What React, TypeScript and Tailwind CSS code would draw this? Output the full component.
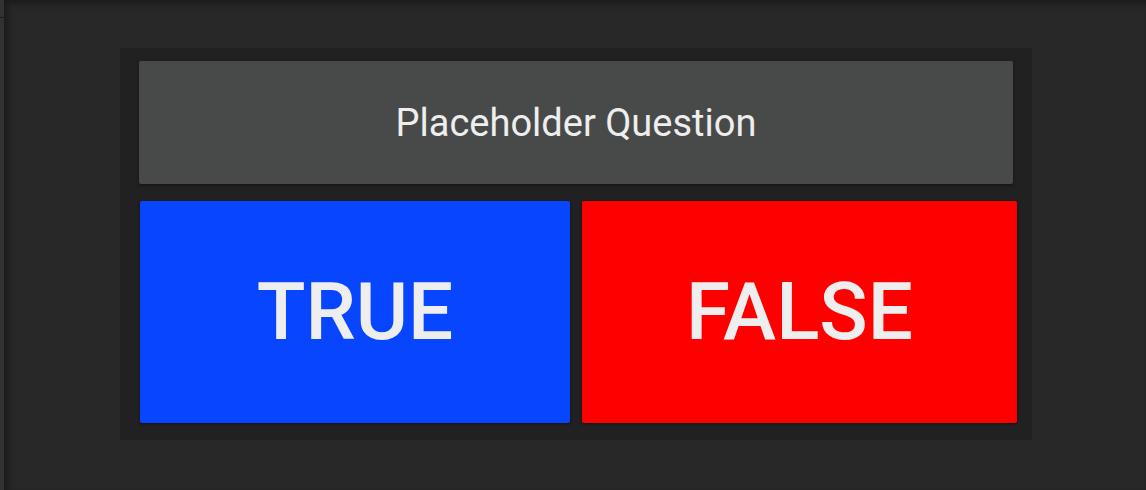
export default function App() {
  return (
    <div
      className="flex h-[490px] w-[1146px] overflow-hidden bg-[#282828]"
      style={{ fontFamily: 'Roboto, "Noto Sans", sans-serif' }}
    >
      {/* side strip */}
      <div className="flex w-[4px] flex-col bg-[#323232]">
        <div className="h-[18px] border-b border-[#1c1c1c]" />
      </div>

      <div className="relative flex-1 shadow-[inset_4px_4px_6px_rgba(0,0,0,0.35)]">
        <div className="ml-[116px] mt-[48px] flex h-[392px] w-[912px] flex-col bg-[#212121] pb-[17px] pl-[19px] pr-[15px] pt-[13px]">
          <div className="mr-[4px] flex h-[123px] items-center justify-center rounded-[2px] bg-[#484a49] shadow-[0_1px_3px_rgba(0,0,0,0.5)]">
            <span className="text-[38px] leading-none text-[#eeeeee]">Placeholder Question</span>
          </div>
          <div className="mt-[17px] flex flex-1 gap-[12px]">
            <button className="ml-[1px] flex w-[430px] items-center justify-center rounded-[2px] bg-[#0845ff] shadow-[0_1px_3px_rgba(0,0,0,0.5)]">
              <span className="text-[80px] font-medium leading-none text-[#eeeeee]">TRUE</span>
            </button>
            <button className="flex flex-1 items-center justify-center rounded-[2px] bg-[#ff0000] shadow-[0_1px_3px_rgba(0,0,0,0.5)]">
              <span className="text-[80px] font-medium leading-none text-[#eeeeee]">FALSE</span>
            </button>
          </div>
        </div>
      </div>
    </div>
  );
}
